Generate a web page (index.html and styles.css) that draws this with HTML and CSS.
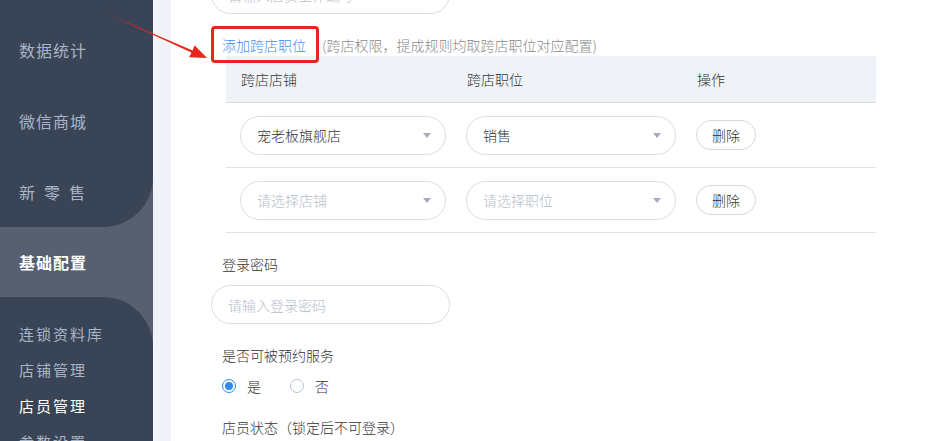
FILE: index.html
```html
<!DOCTYPE html>
<html>
<head>
    <meta charset="utf-8">
    <title>店员管理</title>
    <link rel="stylesheet" href="styles.css">
</head>
<body>
    <div class="layout">
        <div class="sidebar">
            <div class="menu-top">
                <div class="menu-item">数据统计</div>
                <div class="menu-item">微信商城</div>
                <div class="menu-item spaced">新零售</div>
            </div>
            <div class="menu-item active">基础配置</div>
            <div class="menu-sub">
                <div class="sub-item">连锁资料库</div>
                <div class="sub-item">店铺管理</div>
                <div class="sub-item current">店员管理</div>
                <div class="sub-item">参数设置</div>
            </div>
        </div>
        <div class="gutter"></div>
        <div class="main">
            <div class="input top-input"><span class="placeholder">请输入店员工作编号</span></div>

            <div class="cross-head">
                <span class="link-add">添加跨店职位</span>
                <span class="note">(跨店权限，提成规则均取跨店职位对应配置)</span>
            </div>

            <div class="cross-table">
                <div class="row head">
                    <div class="cell">跨店店铺</div>
                    <div class="cell">跨店职位</div>
                    <div class="cell">操作</div>
                </div>
                <div class="row">
                    <div class="cell"><div class="select s-shop"><span>宠老板旗舰店</span><i class="caret"></i></div></div>
                    <div class="cell"><div class="select s-job"><span>销售</span><i class="caret"></i></div></div>
                    <div class="cell"><button class="btn-del">删除</button></div>
                </div>
                <div class="row">
                    <div class="cell"><div class="select s-shop"><span class="placeholder">请选择店铺</span><i class="caret"></i></div></div>
                    <div class="cell"><div class="select s-job"><span class="placeholder">请选择职位</span><i class="caret"></i></div></div>
                    <div class="cell"><button class="btn-del">删除</button></div>
                </div>
            </div>

            <div class="label">登录密码</div>
            <div class="input"><span class="placeholder">请输入登录密码</span></div>

            <div class="label">是否可被预约服务</div>
            <div class="radios">
                <label class="radio checked"><i></i>是</label>
                <label class="radio"><i></i>否</label>
            </div>

            <div class="label status">店员状态（锁定后不可登录）</div>
        </div>
    </div>

    <!-- annotation arrow -->
    <svg class="arrow" width="932" height="441" viewBox="0 0 932 441">
        <polygon points="110,15 192.6,50.6 194.6,45.2 207,58 189.2,57.3 191.4,52.4" fill="#e8261e"/>
    </svg>
</body>
</html>
```

FILE: styles.css
```css
body {
    margin: 0;
    height: 441px;
    overflow: hidden;
    position: relative;
    font-family: "Noto Sans CJK SC", "Liberation Sans", sans-serif;
    font-size: 14px;
    font-weight: 300;
    color: #333;
    background: #fff;
}
.layout {
    display: flex;
    height: 441px;
}

/* sidebar */
.sidebar {
    width: 153px;
    flex: none;
    background: #566070;
    display: flex;
    flex-direction: column;
    overflow: hidden;
}
.menu-top {
    flex: none;
    background: #394457;
    border-bottom-right-radius: 50px;
    padding-top: 14px;
}
.menu-item {
    flex: none;
    height: 71px;
    display: flex;
    align-items: center;
    padding-left: 19px;
    font-size: 16px;
    font-weight: 400;
    letter-spacing: 1px;
    color: #a9b5c6;
}
.menu-item.spaced {
    letter-spacing: 9px;
}
.menu-item.active {
    height: 70px;
    color: #fff;
    font-weight: bold;
}
.menu-sub {
    flex: none;
    height: 200px;
    background: #394457;
    border-top-right-radius: 50px;
    padding-top: 19px;
}
.sub-item {
    height: 36px;
    line-height: 36px;
    padding-left: 19px;
    font-size: 15px;
    font-weight: 400;
    letter-spacing: 2px;
    color: #a9b5c6;
}
.sub-item.current {
    color: #fff;
}
.gutter {
    width: 18px;
    flex: none;
    background: #f0f3f7;
}

/* main form */
.main {
    flex: 1;
    padding-left: 40px;
}
.input {
    box-sizing: border-box;
    width: 239px;
    height: 39px;
    border: 1px solid #d8dee7;
    border-radius: 20px;
    padding-left: 16px;
    display: flex;
    align-items: center;
}
.top-input {
    margin-top: -25px;
}
.placeholder {
    color: #b5bdc9;
}
.cross-head {
    margin-top: 20px;
    padding-left: 11px;
    line-height: 22px;
    display: flex;
}
.link-add {
    position: relative;
    color: #3d8ef0;
}
.link-add::after {
    content: "";
    position: absolute;
    left: -11px;
    top: -8px;
    width: 108px;
    height: 37px;
    box-sizing: border-box;
    border: 3px solid #e8261e;
    border-radius: 4px;
    z-index: 2;
}
.note {
    margin-left: 16px;
    color: #8a8a8a;
}

.cross-table {
    margin-left: 15px;
    width: 650px;
}
.row {
    display: grid;
    grid-template-columns: 226px 230px 1fr;
    height: 64px;
    align-items: center;
    border-bottom: 1px solid #dfe4ea;
}
.row.head {
    height: 46px;
    background: #eff3f7;
    border-bottom-color: #d9dee5;
}
.cell {
    padding-left: 14px;
}
.row.head .cell {
    padding-left: 15px;
}
.select {
    box-sizing: border-box;
    height: 39px;
    border: 1px solid #d8dee7;
    border-radius: 20px;
    padding-left: 16px;
    padding-right: 14px;
    display: flex;
    align-items: center;
    justify-content: space-between;
}
.s-shop {
    width: 206px;
}
.s-job {
    width: 210px;
}
.caret {
    width: 0;
    height: 0;
    border-left: 4px solid transparent;
    border-right: 4px solid transparent;
    border-top: 5px solid #a3adbd;
}
.btn-del {
    width: 60px;
    height: 30px;
    border: 1px solid #d3d9e2;
    border-radius: 15px;
    background: #fff;
    font-family: inherit;
    font-size: 14px;
    font-weight: inherit;
    color: #333;
    padding: 0;
}

.label {
    margin-top: 20px;
    margin-bottom: 10px;
    padding-left: 11px;
    line-height: 22px;
}
.radios {
    padding-left: 11px;
    display: flex;
    line-height: 22px;
    margin-top: -1px;
}
.radio {
    display: flex;
    align-items: center;
    margin-right: 29px;
}
.radio i {
    box-sizing: border-box;
    width: 14px;
    height: 14px;
    border: 1px solid #b8c4d2;
    border-radius: 50%;
    margin-right: 11px;
    position: relative;
}
.radio.checked i {
    border-color: #2d8cf0;
}
.radio.checked i::after {
    content: "";
    position: absolute;
    left: 2px;
    top: 2px;
    width: 8px;
    height: 8px;
    border-radius: 50%;
    background: #2d8cf0;
}
.label.status {
    margin-top: 19px;
}

.arrow {
    position: absolute;
    left: 0;
    top: 0;
    pointer-events: none;
}
```
